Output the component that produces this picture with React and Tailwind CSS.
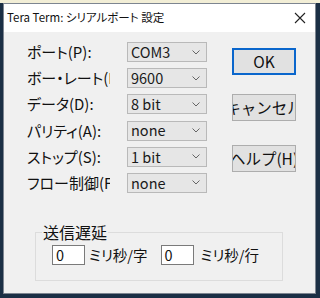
import React from "react";

const FONT = { fontFamily: '"Noto Sans CJK JP", "Noto Sans", sans-serif' };

function Chevron() {
  return (
    <svg width="8" height="5" viewBox="0 0 8 5" className="shrink-0">
      <path d="M0.5 0.5 L4 4 L7.5 0.5" fill="none" stroke="#666" strokeWidth="1" />
    </svg>
  );
}

function Combo({ value }) {
  return (
    <div className="flex h-[20px] w-[80px] items-center justify-between border border-[#b9b9b9] bg-[#e6e6e6] pl-[3px] pr-[6px] text-[14.5px] leading-none text-[#1a1a1a]">
      <span>{value}</span>
      <Chevron />
    </div>
  );
}

function Button({ children, primary, className }) {
  return (
    <div
      className={
        "flex h-[27px] w-[64px] items-center justify-center overflow-hidden whitespace-nowrap bg-[#e1e1e1] text-[15.5px] leading-none text-[#111] " +
        (primary ? "border-2 border-[#0a66cc]" : "border border-[#adadad]") +
        " " +
        (className || "")
      }
    >
      {children}
    </div>
  );
}

const rows = [
  ["ポート(P):", "COM3"],
  ["ボー・レート(B):", "9600"],
  ["データ(D):", "8 bit"],
  ["パリティ(A):", "none"],
  ["ストップ(S):", "1 bit"],
  ["フロー制御(F):", "none"],
];

export default function App() {
  return (
    <div className="relative h-[298px] w-[320px] overflow-hidden bg-[#1b2f45] [font-feature-settings:'palt']" style={FONT}>
      <div className="h-[3px] w-full bg-[#f2eed6]" />
      <div className="ml-[3px] flex h-[291px] w-[313px] flex-col border border-[#7d8590] bg-[#f0f0f0]">
        <div className="flex h-[28px] items-center justify-between bg-white pl-[3px] pr-[9px] text-[11.5px] text-[#111]">
          <span>Tera Term: シリアルポート 設定</span>
          <svg width="12" height="12" viewBox="0 0 12 12">
            <path d="M1 1 L11 11 M11 1 L1 11" stroke="#222" strokeWidth="1.1" />
          </svg>
        </div>

        <div className="flex pl-[23px] pt-[10px]">
          <div className="flex flex-col gap-[6.2px]">
            {rows.map(([label, value]) => (
              <div key={label} className="flex items-center">
                <div className="w-[83px] overflow-hidden whitespace-nowrap text-[15px] leading-[20px] text-[#111]">
                  {label}
                </div>
                <div className="ml-[17px]">
                  <Combo value={value} />
                </div>
              </div>
            ))}
          </div>
          <div className="ml-[25px] flex flex-col">
            <Button primary className="mt-[6px]">OK</Button>
            <Button className="mt-[19px] [font-feature-settings:normal]">キャンセル</Button>
            <Button className="mt-[24px] [font-feature-settings:normal]">ヘルプ(H)</Button>
          </div>
        </div>

        <div className="relative ml-[31px] mt-[39px] h-[49px] w-[248px] border border-[#dcdcdc]">
          <span className="absolute left-[6px] top-[-9px] bg-[#f0f0f0] px-[1px] text-[16px] leading-none text-[#111]">
            送信遅延
          </span>
          <div className="flex items-center pl-[16px] pt-[12px] text-[14.5px] text-[#111]">
            <div className="flex h-[20px] w-[33px] items-center border border-[#7a7a7a] bg-white pl-[3px] leading-none">0</div>
            <span className="ml-[4px] leading-none">ミリ秒/字</span>
            <div className="ml-[13px] flex h-[20px] w-[33px] items-center border border-[#7a7a7a] bg-white pl-[3px] leading-none">0</div>
            <span className="ml-[7px] leading-none">ミリ秒/行</span>
          </div>
        </div>
      </div>
    </div>
  );
}
